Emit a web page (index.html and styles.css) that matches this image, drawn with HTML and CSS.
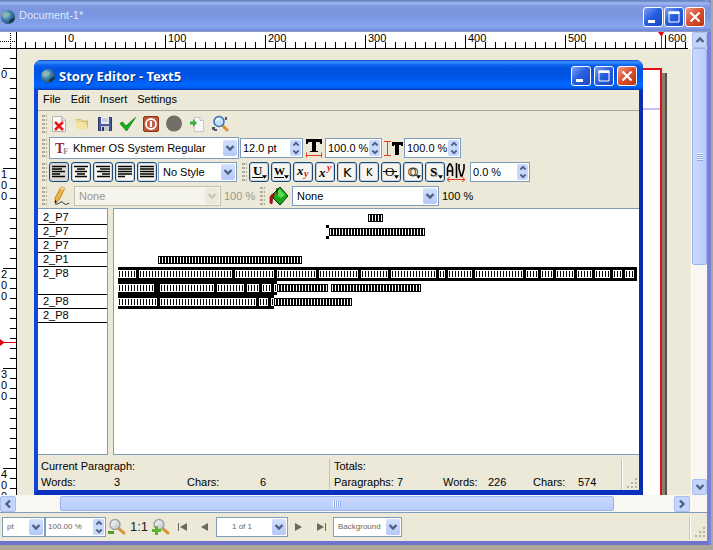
FILE: index.html
```html
<!DOCTYPE html>
<html lang="en">
<head>
<meta charset="utf-8">
<title>Document-1*</title>
<link rel="stylesheet" href="styles.css">
</head>
<body>
<svg class="defs" aria-hidden="true">
  <defs>
    <radialGradient id="globe-fill" cx="0.35" cy="0.35" r="0.7"><stop offset="0" stop-color="#a9cde0"/><stop offset="0.5" stop-color="#3f83ad"/><stop offset="1" stop-color="#244c66"/></radialGradient>
    <linearGradient id="lens-fill" x1="0" y1="0" x2="1" y2="1"><stop offset="0" stop-color="#ffffff"/><stop offset="1" stop-color="#b8bcc4"/></linearGradient>
    <symbol id="globe" viewBox="0 0 16 16"><circle cx="8" cy="8" r="7" fill="url(#globe-fill)"/><path d="M3 4c3-2 4 0 6 0s1 3-1 3-1 3-3 2-4-2-2-5z" fill="#8fb4a8" opacity=".8"/><path d="M9 14c0-4 3-5 6-5-1 4-3 5-6 5z" fill="#18384c"/></symbol>
    <symbol id="chev-down" viewBox="0 0 10 8"><path d="M1.500 2 5 5.500 8.500 2" fill="none" stroke="currentColor" stroke-width="2.400"/></symbol>
    <symbol id="min" viewBox="0 0 18 18"><path d="M4 12h7v3H4z" fill="#fff"/></symbol>
    <symbol id="max" viewBox="0 0 18 18"><path d="M4 4h10v10H4z" fill="none" stroke="#fff"/><path d="M3.500 3.500h11v2.500h-11z" fill="#fff"/></symbol>
    <symbol id="close" viewBox="0 0 18 18"><path d="m4.500 4.500 9 9m0-9-9 9" stroke="#fff" stroke-width="2.200"/></symbol>
    <symbol id="lens" viewBox="0 0 18 18"><path d="m10 10 6 5" stroke="#d39a3c" stroke-width="3" stroke-linecap="round"/><circle cx="7" cy="6.500" r="5" fill="url(#lens-fill)" stroke="#a0a0a0" stroke-width="1.400"/></symbol>
    <symbol id="sizegrip" viewBox="0 0 12 12"><path d="M8 0h2v2H8zM4 4h2v2H4zM8 4h2v2H8zM0 8h2v2H0zM4 8h2v2H4zM8 8h2v2H8z" fill="#b8b4a2"/></symbol>
    <symbol id="drop" viewBox="0 0 6 4"><path d="M0 0h6L3 4z" fill="#000"/></symbol>
    <pattern id="ticks-x" x="8" width="10" height="17" patternUnits="userSpaceOnUse"><path d="M0 10h1v7H0z"/></pattern>
    <pattern id="major-x" x="48" width="100" height="17" patternUnits="userSpaceOnUse"><path d="M0 3h1v14H0z"/></pattern>
    <pattern id="ticks-y" y="9" width="17" height="10" patternUnits="userSpaceOnUse"><path d="M10 0h7v1h-7z"/></pattern>
    <pattern id="major-y" y="19" width="17" height="100" patternUnits="userSpaceOnUse"><path d="M3 0h14v1H3z"/></pattern>
  </defs>
</svg>

<div class="app">
  <header class="titlebar titlebar-idle">
    <svg class="logo"><use href="#globe"/></svg>
    <h1>Document-1*</h1>
    <div class="winbtns">
      <button type="button" class="winbtn" aria-label="Minimize"><svg><use href="#min"/></svg></button>
      <button type="button" class="winbtn" aria-label="Maximize"><svg><use href="#max"/></svg></button>
      <button type="button" class="winbtn winbtn-close" aria-label="Close"><svg><use href="#close"/></svg></button>
    </div>
  </header>

  <main class="viewport">
    <div class="corner"><svg viewBox="0 0 16 16"><path d="M0 9.500h16M10.500 1v15" stroke="#000" stroke-dasharray="1 1"/></svg></div>
    <svg class="ruler-x">
      <rect width="671" height="17" fill="url(#ticks-x)"/><rect width="671" height="17" fill="url(#major-x)"/>
      <g class="ruler-text"><text x="51" y="10">0</text><text x="151" y="10">100</text><text x="251" y="10">200</text><text x="351" y="10">300</text><text x="451" y="10">400</text><text x="551" y="10">500</text><text x="651" y="10">600</text></g>
      <path d="M0 16h671v1H0z"/>
      <path d="M641 0h6l-2 4v12h-1V4z" fill="#e8000c"/>
    </svg>
    <svg class="ruler-y">
      <rect width="17" height="100%" fill="url(#ticks-y)"/><rect width="17" height="100%" fill="url(#major-y)"/>
      <g class="ruler-text"><text x="1" y="29">0</text>
      <text x="1" y="129">1</text><text x="1" y="140">0</text><text x="1" y="151">0</text>
      <text x="1" y="229">2</text><text x="1" y="240">0</text><text x="1" y="251">0</text>
      <text x="1" y="329">3</text><text x="1" y="340">0</text><text x="1" y="351">0</text>
      <text x="1" y="429">4</text><text x="1" y="440">0</text><text x="1" y="451">0</text></g>
      <path d="M16 0h1v2000h-1z"/>
      <path d="M0 290l4 3h12v1H4l-4 3z" fill="#e8000c"/>
    </svg>
    <div class="canvas"><div class="sheet"></div></div>
    <div class="scroll scroll-y">
      <button type="button" class="arrow" aria-label="Scroll up"><svg class="up"><use href="#chev-down"/></svg></button>
      <div class="thumb"></div>
      <button type="button" class="arrow" aria-label="Scroll down"><svg><use href="#chev-down"/></svg></button>
    </div>
    <div class="scroll scroll-x">
      <button type="button" class="arrow" aria-label="Scroll left"><svg class="left"><use href="#chev-down"/></svg></button>
      <div class="thumb"></div>
      <button type="button" class="arrow" aria-label="Scroll right"><svg class="right"><use href="#chev-down"/></svg></button>
    </div>
  </main>

  <footer class="statusbar">
    <label class="combo unit"><select aria-label="Unit"><option>pt</option></select><span class="drop"><svg><use href="#chev-down"/></svg></span></label>
    <label class="spin zoom"><input type="text" value="100.00 %" aria-label="Zoom"><span class="steps"><svg class="up"><use href="#chev-down"/></svg><svg><use href="#chev-down"/></svg></span></label>
    <button type="button" class="tool" aria-label="Zoom out"><svg viewBox="0 0 18 18"><use href="#lens"/><path d="M0 13h6v3H0z" fill="#4fa028"/></svg></button>
    <button type="button" class="tool one">1:1</button>
    <button type="button" class="tool" aria-label="Zoom in"><svg viewBox="0 0 18 18"><use href="#lens"/><path d="M0 11h3V8h3v3h3v3H6v3H3v-3H0z" fill="#5cb52c"/></svg></button>
    <button type="button" class="tool nav" aria-label="First page"><svg viewBox="0 0 10 8"><path d="M0 0h1v8H0zM9 0v8L2 4z" fill="#6b695f"/></svg></button>
    <button type="button" class="tool nav" aria-label="Previous page"><svg viewBox="0 0 10 8"><path d="M8 0v8L1 4z" fill="#6b695f"/></svg></button>
    <label class="combo page"><select aria-label="Page"><option>1 of 1</option></select><span class="drop"><svg><use href="#chev-down"/></svg></span></label>
    <button type="button" class="tool nav" aria-label="Next page"><svg viewBox="0 0 10 8"><path d="M1 0v8l7-4z" fill="#6b695f"/></svg></button>
    <button type="button" class="tool nav" aria-label="Last page"><svg viewBox="0 0 10 8"><path d="M9 0h1v8H9zM1 0v8l7-4z" fill="#6b695f"/></svg></button>
    <label class="combo layer"><select aria-label="Layer"><option>Background</option></select><span class="drop"><svg><use href="#chev-down"/></svg></span></label>
    <span class="gripbox"><svg><use href="#sizegrip"/></svg></span>
  </footer>
</div>

<section class="editor">
  <header class="titlebar">
    <svg class="logo"><use href="#globe"/></svg>
    <h2>Story Editor - Text5</h2>
    <div class="winbtns">
      <button type="button" class="winbtn" aria-label="Minimize"><svg><use href="#min"/></svg></button>
      <button type="button" class="winbtn" aria-label="Maximize"><svg><use href="#max"/></svg></button>
      <button type="button" class="winbtn winbtn-close" aria-label="Close"><svg><use href="#close"/></svg></button>
    </div>
  </header>
  <nav class="menubar"><button type="button">File</button><button type="button">Edit</button><button type="button">Insert</button><button type="button">Settings</button></nav>

  <div class="bar files">
    <span class="grip"></span>
    <button type="button" class="tool" aria-label="Clear all"><svg viewBox="0 0 18 18"><path d="M2.500 1.500h9l4 4v11h-13z" fill="#fafafa" stroke="#b4b4b4"/><path d="M11.500 1.500v4h4z" fill="#ddd" stroke="#bbb"/><path d="m5 7 8 8m0-8-8 8" stroke="#e81c1c" stroke-width="2.600"/></svg></button>
    <button type="button" class="tool" aria-label="Load from file"><svg viewBox="0 0 18 18"><path d="M3 4h5l1 1.500h6V14H5z" fill="#d8bc68"/><path d="M2 7h11l2 7.500H4z" fill="#f4e4a4"/><path d="M4 5h4l1 2H4z" fill="#ecd78c"/></svg></button>
    <button type="button" class="tool" aria-label="Save to file"><svg viewBox="0 0 18 18"><path d="M2.500 2.500h13v13h-13z" fill="#4c5a94" stroke="#2e3564"/><path d="M5 2h8v7H5z" fill="#e8eaf2"/><path d="M6 4h6M6 6h6" stroke="#a8b0cc"/><path d="M5 11h8v5H5z" fill="#c4c8d4"/><path d="M6 12h2v4H6z" fill="#2e3564"/></svg></button>
    <button type="button" class="tool" aria-label="Update and exit"><svg viewBox="0 0 18 18"><path d="M1 8.500 3.500 7l3.500 4 9.500-8.500L7.500 16z" fill="#14b414" stroke="#087808" stroke-width=".8"/></svg></button>
    <button type="button" class="tool" aria-label="Exit without updating"><svg viewBox="0 0 18 18"><rect x="1.500" y="1.500" width="15" height="15" rx="1.500" fill="#c0583c" stroke="#8c3420"/><circle cx="9" cy="9" r="5" fill="none" stroke="#fff" stroke-width="1.800"/><path d="M9 6v6" stroke="#fff" stroke-width="2.200"/></svg></button>
    <button type="button" class="tool" aria-label="Reload from frame"><svg viewBox="0 0 18 18"><circle cx="9" cy="8.500" r="8" fill="#736f66"/></svg></button>
    <button type="button" class="tool" aria-label="Update frame"><svg viewBox="0 0 18 18"><path d="M6.500 2.500h6l3 3v11h-9z" fill="#f8f8f8" stroke="#c8c8c8"/><path d="M12 2.500v3h3.500" fill="none" stroke="#c0c0c0"/><path d="m9 8-4-4v2.500H2v3h3V12z" fill="#38b030"/></svg></button>
    <button type="button" class="tool" aria-label="Search and replace"><svg viewBox="0 0 18 18"><path d="m11 10 5 5" stroke="#d89030" stroke-width="3" stroke-linecap="round"/><circle cx="8" cy="6.500" r="5" fill="#c4e0f8" stroke="#3c70b8" stroke-width="1.500"/><path d="M5 6c1-2 3-2.500 4-2" fill="none" stroke="#fff" stroke-width="1.500"/><path d="M1 12h3v3H1zM3 14h3v2H3zM14 2h2v3h-2z" fill="#4c5468"/></svg></button>
  </div>

  <div class="bar">
    <span class="grip"></span>
    <label class="combo font"><svg class="tt" viewBox="0 0 16 14"><text x="0" y="12" class="tt-big">T</text><text x="8" y="13" class="tt-small">F</text></svg><select aria-label="Font"><option>Khmer OS System Regular</option></select><span class="drop"><svg><use href="#chev-down"/></svg></span></label>
    <label class="spin size"><input type="text" value="12.0 pt" aria-label="Font size"><span class="steps"><svg class="up"><use href="#chev-down"/></svg><svg><use href="#chev-down"/></svg></span></label>
    <svg class="glyph" viewBox="0 0 20 20"><path d="M2 1h16v5h-1.500l-1-2H12v9h2v1H6v-1h2V4H4.500l-1 2H2z"/><path d="M2.500 14.500v5m15-5v5M3 17.500h14" stroke="#e03c28" fill="none"/></svg>
    <label class="spin"><input type="text" value="100.0 %" aria-label="Glyph width"><span class="steps"><svg class="up"><use href="#chev-down"/></svg><svg><use href="#chev-down"/></svg></span></label>
    <svg class="glyph" viewBox="0 0 20 20"><path d="M9 4h11v4h-2V7h-2v10h-4V7h-1v1H9z"/><path d="M1 3.500h7m-7 14h7M4.500 4v13" stroke="#e03c28" fill="none"/></svg>
    <label class="spin"><input type="text" value="100.0 %" aria-label="Glyph height"><span class="steps"><svg class="up"><use href="#chev-down"/></svg><svg><use href="#chev-down"/></svg></span></label>
  </div>

  <div class="bar">
    <span class="grip"></span>
    <div class="toggles">
      <button type="button" class="toggle on" aria-label="Align left"><svg viewBox="0 0 16 14"><path d="M1 1.500h14M1 4h10M1 6.500h13M1 9h8M1 11.500h13" stroke="#000" stroke-width="1.400"/></svg></button>
      <button type="button" class="toggle" aria-label="Align center"><svg viewBox="0 0 16 14"><path d="M1 1.500h14M4 4h8M2 6.500h12M4 9h8M2 11.500h12" stroke="#000" stroke-width="1.400"/></svg></button>
      <button type="button" class="toggle" aria-label="Align right"><svg viewBox="0 0 16 14"><path d="M1 1.500h14M5 4h10M2 6.500h13M7 9h8M2 11.500h13" stroke="#000" stroke-width="1.400"/></svg></button>
      <button type="button" class="toggle" aria-label="Justify"><svg viewBox="0 0 16 14"><path d="M1 1.500h14M1 4h14M1 6.500h14M1 9h14M1 11.500h7" stroke="#000" stroke-width="1.400"/></svg></button>
      <button type="button" class="toggle" aria-label="Force justify"><svg viewBox="0 0 16 14"><path d="M1 1.500h14M1 4h14M1 6.500h14M1 9h14M1 11.500h14" stroke="#000" stroke-width="1.400"/></svg></button>
    </div>
    <label class="combo style"><select aria-label="Paragraph style"><option>No Style</option></select><span class="drop"><svg><use href="#chev-down"/></svg></span></label>
    <span class="grip"></span>
    <div class="toggles">
      <button type="button" class="toggle" aria-label="Underline"><svg viewBox="0 0 16 14"><text x="2" y="10" class="let">U</text><path d="M1 12.500h11" stroke="#000"/><use href="#drop" x="11" y="10" width="5" height="4"/></svg></button>
      <button type="button" class="toggle" aria-label="Underline words"><svg viewBox="0 0 16 14"><text x="1" y="10" class="let thin">W</text><path d="M1 12.500h10" stroke="#000"/><use href="#drop" x="11" y="10" width="5" height="4"/></svg></button>
      <button type="button" class="toggle" aria-label="Subscript"><svg viewBox="0 0 16 14"><text x="2" y="10" class="let it">x</text><text x="9" y="12" class="let it red">y</text></svg></button>
      <button type="button" class="toggle" aria-label="Superscript"><svg viewBox="0 0 16 14"><text x="2" y="12" class="let it">x</text><text x="10" y="6" class="let it red">y</text></svg></button>
      <button type="button" class="toggle" aria-label="All caps"><svg viewBox="0 0 16 14"><text x="4" y="12" class="caps">K</text></svg></button>
      <button type="button" class="toggle" aria-label="Small caps"><svg viewBox="0 0 16 14"><text x="5" y="11" class="caps small">K</text></svg></button>
      <button type="button" class="toggle" aria-label="Strike out"><svg viewBox="0 0 16 14"><text x="2" y="11" class="let plain">O</text><path d="M0 6.500h14" stroke="#000"/><use href="#drop" x="11" y="10" width="5" height="4"/></svg></button>
      <button type="button" class="toggle" aria-label="Outline"><svg viewBox="0 0 16 14"><text x="3" y="11" class="let hollow">O</text><use href="#drop" x="11" y="10" width="5" height="4"/></svg></button>
      <button type="button" class="toggle" aria-label="Shadow"><svg viewBox="0 0 16 14"><text x="4" y="12" class="let ghost">S</text><text x="3" y="11" class="let">S</text><use href="#drop" x="11" y="10" width="5" height="4"/></svg></button>
    </div>
    <svg class="glyph" viewBox="0 0 20 20"><path d="M1.500 14V6l2-4h1l2 4v8M2 9h5M10.500 1v15M13 2v5l2 7h1l2-7V2" fill="none" stroke="#000" stroke-width="1.600"/><path d="M1 17.500h18M4 15l-3 2.500L4 20m12-5 3 2.500-3 2.500" stroke="#e03c28" fill="none"/></svg>
    <label class="spin kern"><input type="text" value="0.0 %" aria-label="Tracking"><span class="steps"><svg class="up"><use href="#chev-down"/></svg><svg><use href="#chev-down"/></svg></span></label>
  </div>

  <div class="bar colors">
    <span class="grip"></span>
    <svg class="glyph" viewBox="0 0 20 20"><path d="M10 1l4 1-6 12-4 3 0-5z" fill="#f0b43c" stroke="#a87820" stroke-width=".8"/><path d="m10 1 4 1-1 2-4-1z" fill="#f4d8a0"/><path d="M4 14v3l2-1z"/><path d="M4 18c4 1 5-3 7-2s3 4 7 1" fill="none" stroke="#222"/></svg>
    <label class="combo color off"><select aria-label="Stroke color" disabled><option>None</option></select><span class="drop"><svg><use href="#chev-down"/></svg></span></label>
    <span class="pct off">100 %</span>
    <span class="grip"></span>
    <svg class="glyph" viewBox="0 0 20 20"><path d="M4 8 11 1l8 9-8 9-7-7z" fill="#18a818" stroke="#063806"/><path d="m6 8 5-5 5 6-4 3z" fill="#58dc48"/><path d="M1 17v-6c1-3 4-4 5-3L4 10l-1 8z" fill="#b81010" stroke="#600" stroke-width=".6"/><path d="M8 2v7" stroke="#000"/></svg>
    <label class="combo color"><select aria-label="Fill color"><option>None</option></select><span class="drop"><svg><use href="#chev-down"/></svg></span></label>
    <span class="pct">100 %</span>
  </div>

  <div class="panes">
    <ol class="styles"><li>2_P7</li><li>2_P7</li><li>2_P7</li><li>2_P1</li><li class="tall">2_P8</li><li>2_P8</li><li>2_P8</li></ol>
    <div class="story">
      <p class="mid"><i style="--n:5"></i></p>
      <p class="mid"><b class="caret"></b><i style="--n:32"></i></p>
      <p></p>
      <p class="indent"><i style="--n:48"></i></p>
      <p><span class="sel full"><i style="--n:6"></i><i style="--n:31"></i><i style="--n:13"></i><i style="--n:13"></i><i style="--n:13"></i><i style="--n:9"></i><i style="--n:15"></i><i style="--n:2"></i><i style="--n:8"></i><i style="--n:16"></i><i style="--n:4"></i><i style="--n:4"></i><i style="--n:6"></i><i style="--n:5"></i><i style="--n:5"></i><i style="--n:3"></i><i style="--n:3"></i></span></p>
      <p><span class="sel"><i style="--n:12"></i><i style="--n:0"></i><i style="--n:18"></i><i style="--n:9"></i><i style="--n:4"></i><i style="--n:3"></i><i style="--n:1"></i></span><i style="--n:17"></i><i style="--n:30"></i></p>
      <p><span class="sel"><i style="--n:13"></i><i style="--n:32"></i><i style="--n:3"></i><i style="--n:1"></i></span><i style="--n:26"></i></p>
    </div>
  </div>

  <footer class="counts">
    <div class="group current"><span class="head">Current Paragraph:</span><span>Words:</span><span>3</span><span>Chars:</span><span>6</span></div>
    <div class="group totals"><span class="head">Totals:</span><span>Paragraphs:</span><span>7</span><span>Words:</span><span>226</span><span>Chars:</span><span>574</span></div>
    <span class="gripbox"><svg><use href="#sizegrip"/></svg></span>
  </footer>
</section>
</body>
</html>
```
FILE: styles.css
```css
* { box-sizing: border-box; }

:root {
  --face: #ece9d8;
  --line: #7f9db9;
  --ui: "Liberation Sans", Arial, sans-serif;
}

body {
  margin: 0;
  height: 100vh;
  overflow: hidden;
  background: #aca899;
  font: 11px/14px var(--ui);
  color: #000;
}

.defs { position: absolute; width: 0; height: 0; }
svg { display: block; }
button, input, select { font: inherit; color: inherit; margin: 0; border: 0; padding: 0; background: none; }

.app {
  display: flex;
  flex-direction: column;
  height: calc(100vh - 5px);
  margin-right: 2px;
  border: solid #6f73cc;
  border-width: 0 4px 4px 0;
  border-right-color: #7b80d8;
  background: var(--face);
}

/* Title bars */
.titlebar {
  display: flex;
  align-items: center;
  gap: 3px;
  flex: none;
  height: 30px;
  padding: 2px 6px 0;
  border-radius: 7px 7px 0 0;
  background: linear-gradient(#0a49c4 0, #3f92ff 2px, #0b62ee 5px, #0053e1 9px, #0054e6 16px, #0066ff 24px, #0060f4 27px, #003dc0 30px);
}
.titlebar h1, .titlebar h2 { flex: 1; margin: 0; }
.titlebar h2 { font: bold 13px/16px "Noto Sans", sans-serif; color: #fff; text-shadow: 1px 1px #0a2a80; }
.titlebar h1 { font: 11px/16px var(--ui); color: #dfe8fb; padding-bottom: 3px; }
.titlebar-idle {
  height: 32px;
  margin-right: -4px;
  padding: 2px 6px 0 0;
  border-bottom: 1px solid #8e9cc4;
  border-radius: 0 7px 0 0;
  background: linear-gradient(#6786c4 0, #6786c4 1px, #a4baf2 3px, #7d97e0 6px, #7b96e0 16px, #86a6ee 27px, #7488dc 30px);
}
.logo { width: 16px; height: 16px; }
.winbtns { display: flex; gap: 1px; }
.winbtn {
  width: 20px;
  height: 20px;
  border: 1px solid #fff;
  border-radius: 3px;
  background: linear-gradient(135deg, #7da2f4, #2a5fe0 45%, #1548c8);
}
.winbtn svg { width: 18px; height: 18px; }
.winbtn-close { background: linear-gradient(135deg, #f0a088, #dc5030 45%, #b83410); }
.editor .winbtns { gap: 3px; }

/* Document view */
.viewport {
  display: grid;
  grid-template: 17px minmax(0, 1fr) 18px / 17px minmax(0, 1fr) 16px;
  flex: 1;
  min-height: 0;
}
.corner { background: #fff; border: solid #000; border-width: 0 1px 1px 0; }
.corner svg { width: 16px; height: 16px; }
.ruler-x { width: 100%; height: 17px; background: #fff; }
.ruler-y { width: 17px; height: 100%; background: #fff; grid-area: 2 / 1; overflow: hidden; }
.ruler-text { font: 11px var(--ui); }
.canvas { grid-area: 2 / 2; overflow: hidden; }
.sheet {
  height: 1000px;
  margin: 19px 29px 0 48px;
  border: 2px solid #e01018;
  background: linear-gradient(#fff 38px, #c4c0f4 38px, #c4c0f4 40px, #fff 40px);
  box-shadow: 3px 5px #85806f, 5px 5px #55524a;
}
.scroll { display: flex; background: #f8f7f2; }
.scroll-y { grid-area: 1 / 3 / 3 / 4; flex-direction: column; justify-content: space-between; border-left: 1px solid #fff; }
.scroll-x { grid-area: 3 / 1 / 4 / 4; border: solid var(--line); border-width: 0 0 1px; padding: 1px 17px 1px 0; }
.arrow {
  display: grid;
  place-items: center;
  flex: none;
  width: 16px;
  height: 16px;
  border: 1px solid #a9bdf0;
  border-radius: 2px;
  background: #c4d4fc;
  color: #4d6185;
}
.scroll-y .arrow { width: 15px; }
.arrow svg { width: 10px; height: 8px; }
.up { transform: rotate(180deg); }
.left { transform: rotate(90deg); }
.right { transform: rotate(-90deg); }
.thumb { display: grid; place-items: center; border: 1px solid #98b4ee; border-radius: 2px; }
.scroll-y .thumb { flex: 0 1 217px; margin-bottom: auto; background: linear-gradient(90deg, #cad8ff, #b8ccfa); }
.scroll-x .thumb { flex: 1; margin: 0 60px 0 44px; background: linear-gradient(#cad8ff, #b8ccfa); }
.scroll-x .thumb::after { content: ""; width: 8px; height: 6px; background: repeating-linear-gradient(90deg, #eef4fe 0 1px, #8ca8e8 1px 2px); }
.scroll-y .thumb::after { content: ""; width: 6px; height: 8px; background: repeating-linear-gradient(#eef4fe 0 1px, #8ca8e8 1px 2px); }

/* Fields */
.combo, .spin {
  display: flex;
  align-items: center;
  height: 20px;
  padding: 1px;
  border: 1px solid var(--line);
  background: #fff;
}
.combo select { appearance: none; flex: 1; min-width: 0; padding-left: 3px; outline: 0; opacity: 1; }
.spin { width: 57px; }
.spin input { flex: 1; min-width: 0; width: 0; padding-left: 1px; }
.drop { display: grid; place-items: center; width: 14px; height: 16px; border-radius: 2px; background: linear-gradient(#d4e0fe, #b4c8f8); color: #4d6185; pointer-events: none; }
.drop svg { width: 10px; height: 8px; }
.steps { display: flex; flex-direction: column; justify-content: space-around; align-items: center; width: 11px; height: 16px; border-radius: 2px; background: #c8d8fc; color: #4d6185; }
.steps svg { width: 8px; height: 6px; }
.off, .off .drop { color: #9a978b; }
.combo.off { border-color: #c4c0b0; background: #f5f4ec; }
.off .drop { background: #ece9dc; color: #c8c5b6; }
.tool { display: grid; place-items: center; width: 18px; height: 18px; }
.tool svg { width: 18px; height: 18px; }

/* Bottom bar of the document */
.statusbar { display: flex; align-items: center; flex: none; height: 28px; padding-left: 2px; color: #6b695f; font-size: 8px; }
.statusbar .tool { margin: 0 2px; }
.statusbar .one { font-size: 13px; color: #222; }
.statusbar .tool.nav { width: 20px; margin: 0 1px; }
.statusbar .nav svg { width: 10px; height: 8px; }
.unit { width: 43px; }
.zoom { width: 61px; }
.page { width: 72px; }
.page select { padding-left: 14px; }
.layer { width: 69px; margin-left: 1px; }
.gripbox { display: flex; align-items: flex-end; justify-content: flex-end; align-self: stretch; width: 17px; margin: 4px 0 2px auto; border-left: 1px solid #fff; box-shadow: -1px 0 #c8c4b4; }
.gripbox svg { width: 12px; height: 12px; }

/* Story editor window */
.editor {
  position: absolute;
  inset: 60px 70px 55px 34px;
  display: flex;
  flex-direction: column;
  border: solid #0f48d8;
  border-width: 0 4px 5px;
  border-color: #0f48d8 #0a2cb0 #0a32c0 #0f48d8;
  border-radius: 7px 7px 0 0;
  background: var(--face);
}
.editor > .titlebar { margin: 0 -4px; }
.menubar { display: flex; gap: 10px; flex: none; height: 21px; padding: 0 5px 2px; border-bottom: 1px solid #aca899; }
.bar { display: flex; align-items: center; gap: 1px; flex: none; height: 24px; padding-left: 3px; }
.bar.files { height: 25px; gap: 5px; }
.bar.colors { gap: 3px; }
.grip { flex: none; width: 6px; height: 18px; margin-right: 1px; background: conic-gradient(from 90deg at 1px 2px, transparent 75%, #b0ad9c 0) 0 0 / 4px 4px; }
.files .grip { margin-right: -2px; }
.font { width: 190px; height: 22px; }
.font select { padding-left: 0; }
.tt { width: 16px; height: 14px; margin: 0 2px 0 4px; }
.tt-big { font: bold 14px "Liberation Serif", serif; fill: #982838; }
.tt-small { font: bold 9px "Liberation Serif", serif; fill: #8c8c8c; }
.size { width: 63px; }
.glyph { width: 20px; height: 20px; flex: none; }
.toggles { display: flex; gap: 2px; }
.toggle { display: grid; place-items: center; width: 20px; height: 20px; border: 1px solid #1c4878; border-radius: 3px; background: #f6f5ee; box-shadow: inset 0 0 0 1px #c8d4e4; }
.toggle.on { background: #dcdad0; }
.toggle svg { width: 16px; height: 14px; }
.let { font: bold 13px "Liberation Serif", serif; }
.thin { font-size: 11px; }
.plain { font-weight: normal; }
.it { font-style: italic; }
.red { font-size: 10px; fill: #e02020; }
.ghost { fill: #999; }
.hollow { fill: #fff; stroke: #444; stroke-width: 1px; }
.caps { font: 13px "DejaVu Sans", sans-serif; }
.small { font-size: 10px; }
.style { width: 79px; margin-right: 3px; }
.kern { width: 60px; margin-left: 3px; }
.color { width: 147px; }
.pct { width: 30px; margin-right: 2px; white-space: nowrap; }

/* Style list and text */
.panes { display: flex; gap: 5px; flex: 1; min-height: 0; }
.styles { width: 70px; margin: 0; padding: 2px 0 0; list-style: none; background: #fff; border: solid var(--line); border-width: 1px 1px 1px 0; }
.styles li { height: 14px; padding-left: 5px; line-height: 13px; border-bottom: 1px solid #000; }
.styles .tall { height: 28px; }
.story { flex: 1; min-width: 0; overflow: hidden; padding: 2px 2px 0 4px; background: #fff; border: 1px solid var(--line); border-right-width: 0; }
.story p { display: flex; height: 14px; margin: 0; align-items: center; gap: 3px; }
.story .mid { justify-content: center; padding-right: 4px; }
.story .indent { padding-left: 40px; }
/* Missing-glyph boxes, --n of them, each three pixels wide */
.story i {
  flex: none;
  width: calc(var(--n) * 3px);
  height: 8px;
  border: solid #000;
  border-width: 1px 0;
  background: repeating-linear-gradient(90deg, #000 0 1px, #fff 1px 2px, #000 2px 3px);
}
.sel { display: flex; align-items: center; gap: 3px; height: 14px; margin-right: -3px; background: #000; }
.sel.full { flex: 1; margin-right: 0; }
.story .sel i { border-color: #fff; background: repeating-linear-gradient(90deg, #fff 0 1px, #000 1px 2px, #fff 2px 3px); }
.caret { width: 3px; height: 14px; margin-right: -3px; background: linear-gradient(#000 3px, transparent 3px, transparent 11px, #000 11px); }

/* Counters */
.counts { display: flex; flex: none; height: 35px; padding: 4px 0 0 3px; }
.group { display: grid; flex: 1; grid-template-rows: 16px 15px; align-content: start; }
.current { grid-template-columns: 73fr 73fr 73fr 69fr; }
.totals { grid-template-columns: 63fr 46fr 45fr 45fr 45fr 44fr; padding-left: 4px; border-left: 1px solid #c8c4b4; }
.head { grid-column: 1 / -1; }
.counts .gripbox { margin: 0; flex: none; }
```
